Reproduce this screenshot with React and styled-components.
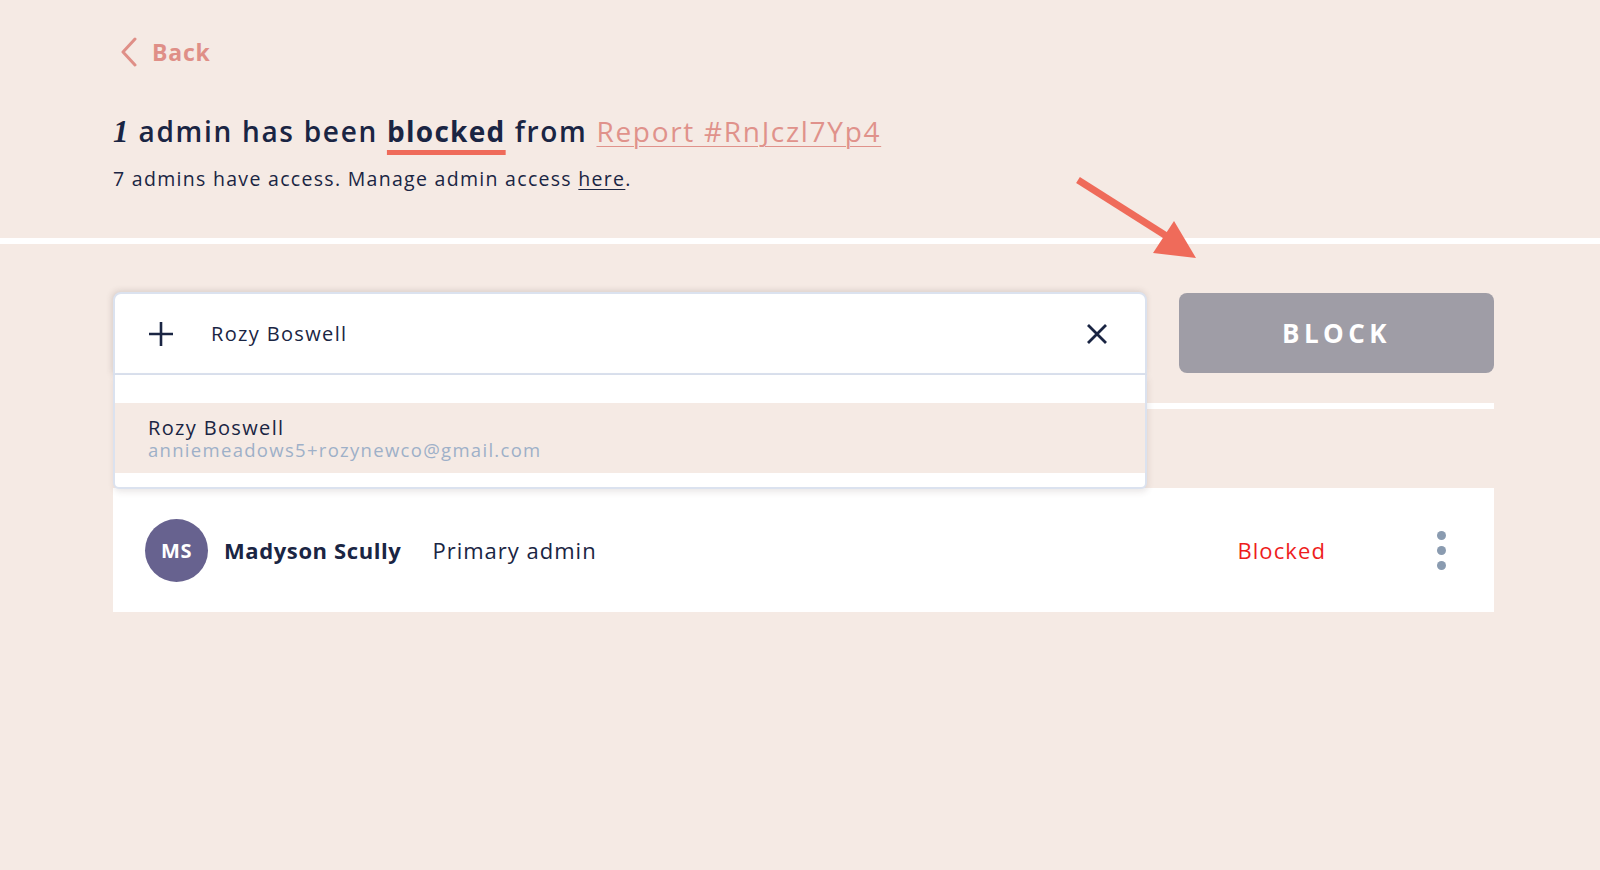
import React from 'react'
import styled, { createGlobalStyle } from 'styled-components'

const GlobalStyle = createGlobalStyle`
  html, body {
    margin: 0;
    padding: 0;
    background: #f5eae4;
    font-family: "Open Sans", "Liberation Sans", sans-serif;
    color: #1a2543;
  }
`

const Page = styled.div`
  position: relative;
  min-height: 870px;
  background: #f5eae4;
`

const Header = styled.header`
  padding: 38px 106px 0 113px;
`

const BackLink = styled.a`
  display: flex;
  align-items: center;
  gap: 14px;
  height: 28px;
  padding-left: 7px;
  color: #df8f87;
  font-size: 23px;
  font-weight: 700;
  letter-spacing: 0.8px;
  text-decoration: none;
  cursor: pointer;
`

const Title = styled.h1`
  margin: 48px 0 0;
  height: 36px;
  font-size: 28px;
  line-height: 34px;
  font-weight: 600;
  letter-spacing: 1.7px;
  color: #1a2543;
  white-space: nowrap;
`

const Count = styled.span`
  font-family: "Liberation Serif", serif;
  font-style: italic;
  font-size: 31px;
  letter-spacing: 0;
  margin-right: 1px;
`

const Marked = styled.span`
  font-weight: 700;
  letter-spacing: 1.3px;
  text-decoration: underline;
  text-decoration-color: #ef6b5a;
  text-decoration-thickness: 5px;
  text-underline-offset: 8px;
`

const ReportLink = styled.a`
  color: #e0928b;
  font-weight: 500;
  text-decoration: underline;
  text-decoration-thickness: 1px;
  text-underline-offset: 4px;
`

const Subtitle = styled.p`
  margin: 16px 0 0;
  height: 26px;
  font-size: 19.5px;
  line-height: 26px;
  letter-spacing: 1.3px;
  color: #1a2543;

  a {
    color: #1a2543;
    text-decoration: underline;
    text-underline-offset: 3px;
  }
`

const Divider = styled.div`
  margin-top: 46px;
  height: 6px;
  background: #ffffff;
`

const Content = styled.main`
  padding: 48px 106px 0 113px;
`

const SearchRow = styled.div`
  display: flex;
  gap: 32px;
  height: 83px;
`

const SearchBox = styled.div`
  position: relative;
  flex: 1;
  z-index: 2;
`

const InputField = styled.div`
  display: flex;
  align-items: center;
  height: 83px;
  box-sizing: border-box;
  background: #ffffff;
  border: 2px solid #dbe2ef;
  border-radius: 8px 8px 0 0;
  box-shadow: -1px -1px 6px rgba(80, 60, 60, 0.18);
  padding: 0 37px 0 33px;
`

const IconSlot = styled.span`
  display: flex;
  align-items: center;
  justify-content: center;
  width: ${p => p.size}px;
  height: ${p => p.size}px;
  color: #1a2543;
`

const InputText = styled.span`
  flex: 1;
  margin-left: 37px;
  font-size: 20px;
  letter-spacing: 1.35px;
  color: #1a2543;
`

const Menu = styled.div`
  position: absolute;
  top: 100%;
  left: 0;
  right: 0;
  background: #ffffff;
  border: 2px solid #dbe2ef;
  border-top: none;
  border-radius: 0 0 6px 6px;
  box-shadow: 1px 3px 6px rgba(80, 60, 60, 0.12);
  padding: 28px 0 14px;
`

const MenuItem = styled.div`
  display: flex;
  flex-direction: column;
  justify-content: center;
  height: 70px;
  padding-left: 33px;
  background: ${p => (p.active ? '#f5eae4' : '#ffffff')};
`

const ItemName = styled.span`
  font-size: 20px;
  line-height: 23px;
  letter-spacing: 1.35px;
  color: #1a2543;
`

const ItemEmail = styled.span`
  font-size: 18.5px;
  line-height: 21px;
  font-weight: 500;
  letter-spacing: 1.3px;
  color: #9eb0c8;
`

const BlockButton = styled.button`
  width: 315px;
  height: 80px;
  margin-top: 1px;
  border: none;
  border-radius: 8px;
  background: #9f9da6;
  color: #ffffff;
  font-family: "Open Sans", "Liberation Sans", sans-serif;
  font-size: 26px;
  font-weight: 700;
  letter-spacing: 4.5px;
  cursor: pointer;
`

const ListDivider = styled.div`
  margin-top: 28px;
  height: 6px;
  background: #ffffff;
`

const AdminRow = styled.div`
  display: flex;
  align-items: center;
  margin-top: 79px;
  height: 124px;
  background: #ffffff;
  padding: 0 48px 0 32px;
`

const Avatar = styled.div`
  display: flex;
  align-items: center;
  justify-content: center;
  width: 63px;
  height: 63px;
  border-radius: 50%;
  background: #67628f;
  color: #ffffff;
  font-size: 20px;
  font-weight: 700;
  letter-spacing: 0.5px;
`

const AdminName = styled.span`
  margin-left: 16px;
  font-size: 22px;
  font-weight: 700;
  letter-spacing: 0.6px;
  color: #1a2543;
`

const AdminRole = styled.span`
  margin-left: 31px;
  flex: 1;
  font-size: 22px;
  letter-spacing: 1px;
  color: #1a2543;
`

const Status = styled.span`
  font-size: 22px;
  letter-spacing: 1.1px;
  color: #ee1d1d;
`

const MoreButton = styled.div`
  display: flex;
  flex-direction: column;
  gap: 6px;
  margin-left: 111px;

  span {
    width: 9px;
    height: 9px;
    border-radius: 50%;
    background: #8a9bb0;
  }
`

const Annotation = styled.svg`
  position: absolute;
  left: 1070px;
  top: 170px;
  pointer-events: none;
`

const App = () => {
  return (
    <Page>
      <GlobalStyle />
      <Header>
        <BackLink>
          <svg width="18" height="30" viewBox="0 0 18 30">
            <path d="M15 2 L3 15 L15 28" fill="none" stroke="#df8f87" strokeWidth="3" strokeLinecap="round" strokeLinejoin="round" />
          </svg>
          Back
        </BackLink>
        <Title>
          <Count>1</Count> admin has been <Marked>blocked</Marked> from <ReportLink>Report #RnJczl7Yp4</ReportLink>
        </Title>
        <Subtitle>
          7 admins have access. Manage admin access <a>here</a>.
        </Subtitle>
      </Header>
      <Divider />

      <Content>
        <SearchRow>
          <SearchBox>
            <InputField>
              <IconSlot size={26}>
                <svg width="26" height="26" viewBox="0 0 26 26">
                  <path d="M13 1 V25 M1 13 H25" stroke="#1a2543" strokeWidth="2.6" />
                </svg>
              </IconSlot>
              <InputText>Rozy Boswell</InputText>
              <IconSlot size={22}>
                <svg width="22" height="22" viewBox="0 0 22 22">
                  <path d="M2 2 L20 20 M20 2 L2 20" stroke="#1a2543" strokeWidth="2.8" />
                </svg>
              </IconSlot>
            </InputField>
            <Menu>
              <MenuItem active>
                <ItemName>Rozy Boswell</ItemName>
                <ItemEmail>anniemeadows5+rozynewco@gmail.com</ItemEmail>
              </MenuItem>
            </Menu>
          </SearchBox>
          <BlockButton>BLOCK</BlockButton>
        </SearchRow>

        <ListDivider />

        <AdminRow>
          <Avatar>MS</Avatar>
          <AdminName>Madyson Scully</AdminName>
          <AdminRole>Primary admin</AdminRole>
          <Status>Blocked</Status>
          <MoreButton>
            <span />
            <span />
            <span />
          </MoreButton>
        </AdminRow>
      </Content>

      <Annotation width="140" height="100" viewBox="0 0 140 100">
        <path d="M8 10 L98 67" stroke="#ef6b5a" strokeWidth="7" />
        <path d="M83 83 L104 51 L126 88 Z" fill="#ef6b5a" />
      </Annotation>
    </Page>
  )
}

export default App
